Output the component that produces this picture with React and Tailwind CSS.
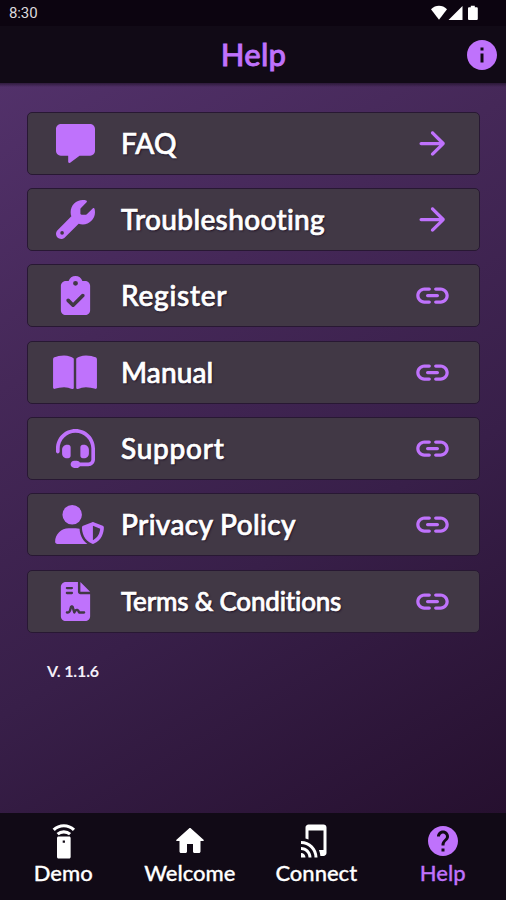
import {
  FaMessage,
  FaWrench,
  FaClipboardCheck,
  FaBookOpen,
  FaHeadset,
  FaUserShield,
  FaFileContract,
} from "react-icons/fa6";
import { MdInfo, MdHelp, MdTapAndPlay } from "react-icons/md";

function ArrowIcon() {
  return (
    <svg viewBox="0 0 24 24" className="size-[39px] fill-current">
      <path d="M5 13h11.17l-4.88 4.88c-.39.39-.39 1.03 0 1.42.39.39 1.02.39 1.41 0l6.59-6.59c.39-.39.39-1.02 0-1.41l-6.58-6.6c-.39-.39-1.02-.39-1.41 0-.39.39-.39 1.02 0 1.41L16.17 11H5c-.55 0-1 .45-1 1s.45 1 1 1z" />
    </svg>
  );
}

function LinkIcon() {
  return (
    <svg viewBox="0 0 24 24" className="size-[39px] fill-current">
      <path d="M17 7h-3c-.55 0-1 .45-1 1s.45 1 1 1h3c1.65 0 3 1.35 3 3s-1.35 3-3 3h-3c-.55 0-1 .45-1 1s.45 1 1 1h3c2.76 0 5-2.24 5-5s-2.24-5-5-5zm-9 5c0 .55.45 1 1 1h6c.55 0 1-.45 1-1s-.45-1-1-1H9c-.55 0-1 .45-1 1zm2 3H7c-1.65 0-3-1.35-3-3s1.35-3 3-3h3c.55 0 1-.45 1-1s-.45-1-1-1H7c-2.76 0-5 2.24-5 5s2.24 5 5 5h3c.55 0 1-.45 1-1s-.45-1-1-1z" />
    </svg>
  );
}

function HomeIcon({ className }) {
  return (
    <svg viewBox="0 0 24 24" className={className + " fill-current"}>
      <path d="M10 19v-5h4v5c0 .55.45 1 1 1h3c.55 0 1-.45 1-1v-7h1.7c.46 0 .68-.57.33-.87L12.67 3.6c-.38-.34-.96-.34-1.34 0l-8.36 7.53c-.34.3-.13.87.33.87H5v7c0 .55.45 1 1 1h3c.55 0 1-.45 1-1z" />
    </svg>
  );
}

function RemoteIcon({ className }) {
  return (
    <svg viewBox="0 0 24 24" className={className}>
      <path
        fill="currentColor"
        fillRule="evenodd"
        d="M9 9h7.1c.55 0 1 .45 1 1v12.6c0 .55-.45 1-1 1H9c-.55 0-1-.45-1-1V10c0-.55.45-1 1-1zm2.8 2.6v1.5h1.5v-1.5z"
      />
      <path
        fill="none"
        stroke="currentColor"
        strokeWidth="2.1"
        d="M5.8 4.6c3.8-3.7 9.7-3.7 13.5 0M8.4 7.4c2.3-2 6-2 8.3 0"
      />
    </svg>
  );
}

const items = [
  { label: "FAQ", Icon: FaMessage, size: "size-[39px]", Action: ArrowIcon, text: "text-[28px] tracking-[0.1px]" },
  { label: "Troubleshooting", Icon: FaWrench, size: "size-[39px]", Action: ArrowIcon, text: "text-[28px] tracking-[0.35px]" },
  { label: "Register", Icon: FaClipboardCheck, size: "size-[39px]", Action: LinkIcon, text: "text-[28px] tracking-[0.75px]" },
  { label: "Manual", Icon: FaBookOpen, size: "h-[39px] w-[44px]", Action: LinkIcon, text: "text-[28px] tracking-[0.1px]" },
  { label: "Support", Icon: FaHeadset, size: "size-[39px]", Action: LinkIcon, text: "text-[28px] tracking-[0.75px]" },
  { label: "Privacy Policy", Icon: FaUserShield, size: "ml-[9px] h-[39px] w-[49px]", Action: LinkIcon, text: "text-[28px] tracking-[0.35px]" },
  { label: "Terms & Conditions", Icon: FaFileContract, size: "size-[39px]", Action: LinkIcon, text: "text-[26px] tracking-[-0.2px]" },
];

const tabs = [
  { label: "Demo", Icon: RemoteIcon, text: "text-white" },
  { label: "Welcome", Icon: HomeIcon, text: "text-white" },
  { label: "Connect", Icon: MdTapAndPlay, text: "text-white" },
  { label: "Help", Icon: MdHelp, text: "text-[#bf72fc]" },
];

function StatusBar() {
  return (
    <div className="flex h-[26px] items-center justify-between bg-[#0c0410] pl-[9px] pr-[27px] text-[#dcdadd]">
      <span className="pt-px font-[Roboto] text-[15px] font-normal leading-none tracking-[-0.1px]">8:30</span>
      <svg viewBox="431 5 48 16" className="h-4 w-12 fill-white">
        <path d="M431 9.3c4.6-4.6 11.4-4.6 16 0l-8 10.4z" />
        <path d="M462.5 6v14h-14z" />
        <path d="M470.8 5.8h4v1.4h1.7c.8 0 1.3.5 1.3 1.3v10.2c0 .8-.5 1.3-1.3 1.3h-7.2c-.8 0-1.3-.5-1.3-1.3V8.5c0-.8.5-1.3 1.3-1.3h1.5z" />
      </svg>
    </div>
  );
}

export default function App() {
  return (
    <div className="flex h-[900px] w-[506px] flex-col overflow-hidden bg-[#110a16] font-[Lato,sans-serif] font-medium [font-variant-ligatures:none]">
      <StatusBar />
      <header className="grid h-[57px] grid-cols-[1fr_auto_1fr] items-center bg-[#110a16] pr-[6px] text-[#bf72fc]">
        <h1 className="col-start-2 pl-[7px] text-[31px] leading-none tracking-[0.3px] [-webkit-text-stroke:0.8px_currentColor]">Help</h1>
        <MdInfo className="size-9 justify-self-end" />
      </header>
      <main className="flex-1 bg-[linear-gradient(to_bottom,rgba(20,10,26,0.55),transparent_4px),linear-gradient(150deg,#52316a_0%,#452858_30%,#381f49_62%,#26102f_100%)] px-[27px] pt-[28.5px]">
        <ul className="flex flex-col gap-[13.4px]">
          {items.map(({ label, Icon, size, Action, text }) => (
            <li
              key={label}
              className="flex h-[63px] w-[453px] items-center rounded-[5px] border-[1.5px] border-[#281833] bg-[#413845] pr-[27px] text-[#bf72fc]"
            >
              <span className="ml-[17px] flex w-[60px] justify-center">
                <Icon className={"shrink-0 " + size} />
              </span>
              <span
                className={
                  "ml-[16px] flex-1 whitespace-nowrap pb-px leading-none text-white [-webkit-text-stroke:0.7px_white] [text-shadow:1px_1px_2px_#160a22] " +
                  text
                }
              >
                {label}
              </span>
              <Action />
            </li>
          ))}
        </ul>
        <p className="pl-[20px] pt-[29px] text-[16px] font-bold leading-[18px] tracking-[-0.15px] text-[#f4eff8]">V. 1.1.6</p>
      </main>
      <nav className="grid h-[87px] grid-cols-4 bg-[#110a16] pt-[10px]">
        {tabs.map(({ label, Icon, text }) => (
          <div key={label} className={"flex flex-col items-center " + text}>
            <Icon className="size-9" />
            <span className="text-[22px] leading-[28px] [-webkit-text-stroke:0.3px_currentColor]">{label}</span>
          </div>
        ))}
      </nav>
    </div>
  );
}
